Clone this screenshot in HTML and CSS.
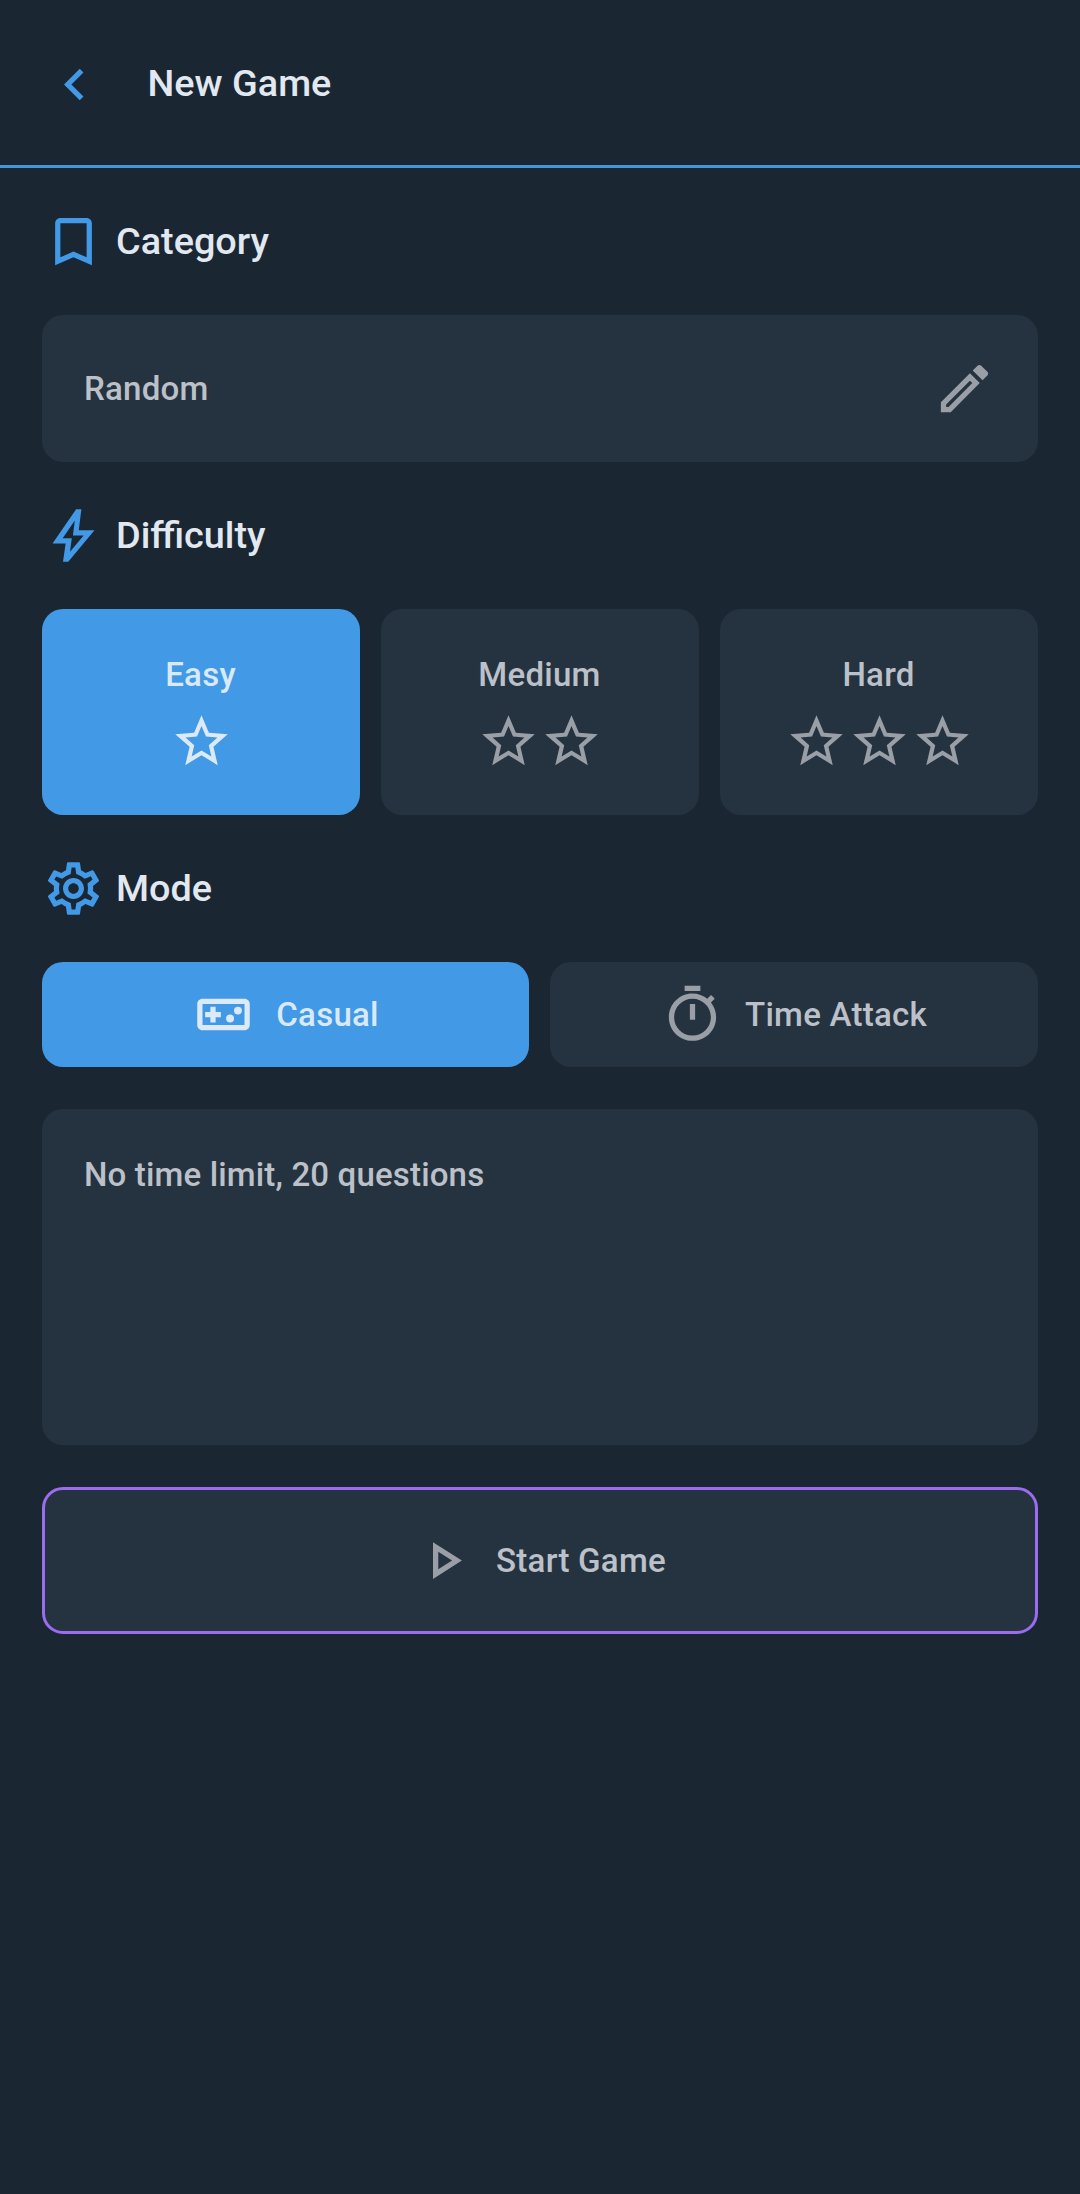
FILE: index.html
```html
<!DOCTYPE html>
<html lang="en">
<head>
<meta charset="utf-8">
<title>New Game</title>
<link rel="stylesheet" href="styles.css">
</head>
<body>
<svg class="sprite" aria-hidden="true">
  <symbol id="star" viewBox="0 0 24 24"><path d="M22 9.24l-7.19-.62L12 2 9.19 8.63 2 9.24l5.46 4.73L5.82 21 12 17.27 18.18 21l-1.63-7.03L22 9.24zM12 15.4l-3.76 2.27 1-4.28-3.32-2.88 4.38-.38L12 6.1l1.71 4.04 4.38.38-3.32 2.88 1 4.28L12 15.4z"/></symbol>
</svg>
<header class="topbar">
  <svg class="icon back" viewBox="0 0 24 24"><path d="M15.41 7.41 14 6l-6 6 6 6 1.41-1.41L10.83 12z"/></svg>
  <h1 class="title">New Game</h1>
</header>
<main class="content">
  <h2 class="heading">
    <svg class="icon" viewBox="0 0 24 24"><path d="M17 3H7c-1.1 0-1.99.9-1.99 2L5 21l7-3 7 3V5c0-1.1-.9-2-2-2zm0 15l-5-2.18L7 18V5h10v13z"/></svg>
    Category
  </h2>
  <div class="card category">
    <span>Random</span>
    <svg class="icon" viewBox="0 0 24 24"><path d="M14.06 9.02l.92.92L5.92 19H5v-.92l9.06-9.06M17.66 3c-.25 0-.51.1-.7.29l-1.83 1.83 3.75 3.75 1.83-1.83c.39-.39.39-1.02 0-1.41l-2.34-2.34c-.2-.2-.45-.29-.71-.29zm-3.6 3.19L3 17.25V21h3.75L17.81 9.94l-3.75-3.75z"/></svg>
  </div>
  <h2 class="heading">
    <svg class="icon" viewBox="0 0 24 24"><path d="m10.675 18.2 5.175-6.2h-4.075l.725-5.675L7.875 13h3.475l-.675 5.2ZM8 22l1-7H4l9-13h2l-1 8h6L10 22H8Z"/></svg>
    Difficulty
  </h2>
  <div class="row">
    <div class="card level selected">
      <span>Easy</span>
      <div class="stars"><svg class="icon"><use href="#star"/></svg></div>
    </div>
    <div class="card level">
      <span>Medium</span>
      <div class="stars"><svg class="icon"><use href="#star"/></svg><svg class="icon"><use href="#star"/></svg></div>
    </div>
    <div class="card level">
      <span>Hard</span>
      <div class="stars"><svg class="icon"><use href="#star"/></svg><svg class="icon"><use href="#star"/></svg><svg class="icon"><use href="#star"/></svg></div>
    </div>
  </div>
  <h2 class="heading">
    <svg class="icon" viewBox="0 0 24 24"><path d="M19.43 12.98c.04-.32.07-.64.07-.98 0-.34-.03-.66-.07-.98l2.11-1.65c.19-.15.24-.42.12-.64l-2-3.46c-.09-.16-.26-.25-.44-.25-.06 0-.12.01-.17.03l-2.49 1c-.52-.4-1.08-.73-1.69-.98l-.38-2.65C14.46 2.18 14.25 2 14 2h-4c-.25 0-.46.18-.49.42l-.38 2.65c-.61.25-1.17.59-1.69.98l-2.49-1c-.06-.02-.12-.03-.18-.03-.17 0-.34.09-.43.25l-2 3.46c-.13.22-.07.49.12.64l2.11 1.65c-.04.32-.07.65-.07.98 0 .33.03.66.07.98l-2.11 1.65c-.19.15-.24.42-.12.64l2 3.46c.09.16.26.25.44.25.06 0 .12-.01.17-.03l2.49-1c.52.4 1.08.73 1.69.98l.38 2.65c.03.24.24.42.49.42h4c.25 0 .46-.18.49-.42l.38-2.65c.61-.25 1.17-.59 1.69-.98l2.49 1c.06.02.12.03.18.03.17 0 .34-.09.43-.25l2-3.46c.12-.22.07-.49-.12-.64l-2.11-1.65zm-1.98-1.71c.04.31.05.52.05.73 0 .21-.02.43-.05.73l-.14 1.13.89.7 1.08.84-.7 1.21-1.27-.51-1.04-.42-.9.68c-.43.32-.84.56-1.25.73l-1.06.43-.16 1.13-.2 1.35h-1.4l-.19-1.35-.16-1.13-1.06-.43c-.43-.18-.83-.41-1.23-.71l-.91-.7-1.06.43-1.27.51-.7-1.21 1.08-.84.89-.7-.14-1.13c-.03-.31-.05-.54-.05-.74s.02-.43.05-.73l.14-1.13-.89-.7-1.08-.84.7-1.21 1.27.51 1.04.42.9-.68c.43-.32.84-.56 1.25-.73l1.06-.43.16-1.13.2-1.35h1.39l.19 1.35.16 1.13 1.06.43c.43.18.83.41 1.23.71l.91.7 1.06-.43 1.27-.51.7 1.21-1.07.85-.89.7.14 1.13zM12 8c-2.21 0-4 1.79-4 4s1.79 4 4 4 4-1.79 4-4-1.79-4-4-4zm0 6c-1.1 0-2-.9-2-2s.9-2 2-2 2 .9 2 2-.9 2-2 2z"/></svg>
    Mode
  </h2>
  <div class="row modes">
    <div class="card mode selected">
      <svg class="icon" viewBox="0 0 24 24"><path fill-rule="evenodd" d="M20 6H4c-1.1 0-2 .9-2 2v8c0 1.1.9 2 2 2h16c1.1 0 2-.9 2-2V8c0-1.1-.9-2-2-2zm0 10H4V8h16v8z"/><path d="M7 15h2v-2h2v-2H9V9H7v2H5v2h2z"/><circle cx="14.5" cy="13.5" r="1.5"/><circle cx="17.5" cy="10.5" r="1.5"/></svg>
      <span>Casual</span>
    </div>
    <div class="card mode">
      <svg class="icon" viewBox="0 0 24 24"><path d="M15 1H9v2h6V1zm-4 13h2V8h-2v6zm8.03-6.61l1.42-1.42c-.43-.51-.9-.99-1.41-1.41l-1.42 1.42C16.07 4.74 14.12 4 12 4c-4.97 0-9 4.03-9 9s4.02 9 9 9 9-4.03 9-9c0-2.12-.74-4.07-1.97-5.61zM12 20c-3.87 0-7-3.13-7-7s3.13-7 7-7 7 3.13 7 7-3.13 7-7 7z"/></svg>
      <span>Time Attack</span>
    </div>
  </div>
  <div class="card info">No time limit, 20 questions</div>
  <div class="card start">
    <svg class="icon" viewBox="0 0 24 24"><path d="M10 8.64 15.27 12 10 15.36V8.64M8 5v14l11-7L8 5z"/></svg>
    <span>Start Game</span>
  </div>
</main>
</body>
</html>
```
FILE: styles.css
```css
* {
  box-sizing: border-box;
}

body {
  margin: 0;
  min-height: 2194px;
  background: #1a2632;
  color: #e2e8f0;
  font-family: "Roboto", sans-serif;
  font-weight: 500;
}

.sprite {
  display: none;
}

.icon {
  flex: none;
  width: 63px;
  height: 63px;
  fill: currentColor;
}

.topbar {
  display: flex;
  align-items: center;
  gap: 41.5px;
  height: 168px;
  padding: 1px 42px 0 43px;
  border-bottom: 3px solid #4794de;
}

.back {
  margin-top: 3px;
  color: #4299e6;
}

.title,
.heading {
  margin: 0;
  font-size: 37.8px;
  font-weight: 500;
  line-height: 56px;
}

.content {
  display: flex;
  flex-direction: column;
  gap: 42px;
  padding: 42px;
}

.heading {
  display: flex;
  align-items: center;
  gap: 11px;
  height: 63px;
  padding-bottom: 2px;
}

.heading .icon {
  margin-top: 2px;
  color: #4299e6;
}

.card {
  border-radius: 21px;
  background: #253340;
  color: #bcc0c8;
  font-size: 33.075px;
  line-height: 47.25px;
  letter-spacing: 0.236px;
}

.card .icon {
  color: #9a9fa7;
}

.card.selected {
  background: #4299e6;
  color: #d9e9f9;
}

.card.selected .icon {
  color: #dceaf8;
}

.category {
  display: flex;
  align-items: center;
  justify-content: space-between;
  height: 147px;
  padding: 0 42px;
}

.row {
  display: flex;
  gap: 21px;
}

.row .card {
  flex: 1;
}

.level {
  display: flex;
  flex-direction: column;
  align-items: center;
  gap: 11.75px;
  height: 206px;
  padding: 42px 0;
}

.level span {
  margin-right: 1px;
}

.stars {
  display: flex;
}

.modes {
  display: grid;
  grid-template-columns: 487px 488px;
}

.mode,
.start {
  display: flex;
  align-items: center;
  justify-content: center;
  gap: 21px;
}

.mode {
  height: 105px;
}

.info {
  height: 336px;
  padding: 42px;
  letter-spacing: 0.14px;
}

.start {
  height: 147px;
  padding-right: 2px;
  border: 3px solid #9b6cf0;
}
```
